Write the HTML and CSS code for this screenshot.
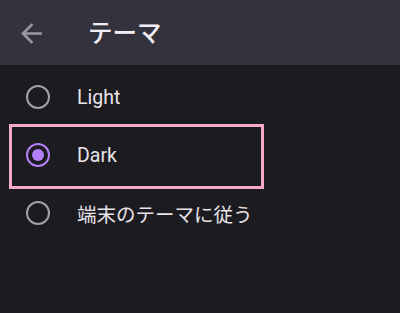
FILE: index.html
```html
<!DOCTYPE html>
<html lang="ja">
<head>
<meta charset="utf-8">
<link rel="stylesheet" href="styles.css">
</head>
<body>
<div class="screen">
  <header class="appbar">
    <svg class="back" viewBox="0 0 24 24" width="31" height="31"><path d="M20 11H7.83l5.59-5.59L12 4l-8 8 8 8 1.41-1.41L7.83 13H20v-2z" fill="#9c99a6"/></svg>
    <h1 class="title">テーマ</h1>
  </header>
  <main class="list">
    <div class="row">
      <span class="radio"></span>
      <span class="label">Light</span>
    </div>
    <div class="row">
      <span class="radio checked"></span>
      <span class="label">Dark</span>
    </div>
    <div class="row">
      <span class="radio"></span>
      <span class="label">端末のテーマに従う</span>
    </div>
    <div class="highlight"></div>
  </main>
</div>
</body>
</html>
```
FILE: styles.css
```css
html, body {
  margin: 0;
  padding: 0;
  background: #1c1b20;
}
.screen {
  width: 400px;
  height: 313px;
  background: #1c1b20;
  font-family: Roboto, "Noto Sans CJK JP", sans-serif;
  color: #e8e4ea;
  overflow: hidden;
}
.appbar {
  height: 65px;
  background: #34323c;
  display: flex;
  align-items: center;
}
.back {
  margin-left: 16px;
  margin-top: 1px;
  flex: none;
}
.title {
  margin: 0 0 0 41px;
  font-family: "Noto Sans CJK JP", sans-serif;
  font-size: 24.5px;
  font-weight: 500;
  color: #f2eff4;
  line-height: 1;
}
.list {
  position: relative;
  padding-top: 3px;
}
.row {
  height: 58px;
  display: flex;
  align-items: center;
}
.radio {
  box-sizing: border-box;
  width: 24px;
  height: 24px;
  margin-left: 26px;
  border: 2.5px solid #a3a0a9;
  border-radius: 50%;
  display: flex;
  align-items: center;
  justify-content: center;
  flex: none;
}
.radio.checked {
  border-color: #b37ff6;
}
.radio.checked::after {
  content: "";
  width: 12px;
  height: 12px;
  border-radius: 50%;
  background: #b37ff6;
}
.label {
  margin-left: 27px;
  font-size: 19.5px;
  font-family: Roboto, "Noto Sans CJK JP", sans-serif;
  color: #e8e4ea;
}
.row:last-of-type .label {
  font-family: "Noto Sans CJK JP", sans-serif;
  font-size: 19px;
}
.highlight {
  position: absolute;
  left: 9px;
  top: 59px;
  width: 255px;
  height: 65px;
  box-sizing: border-box;
  border: 3px solid #f5a9c9;
}
```
